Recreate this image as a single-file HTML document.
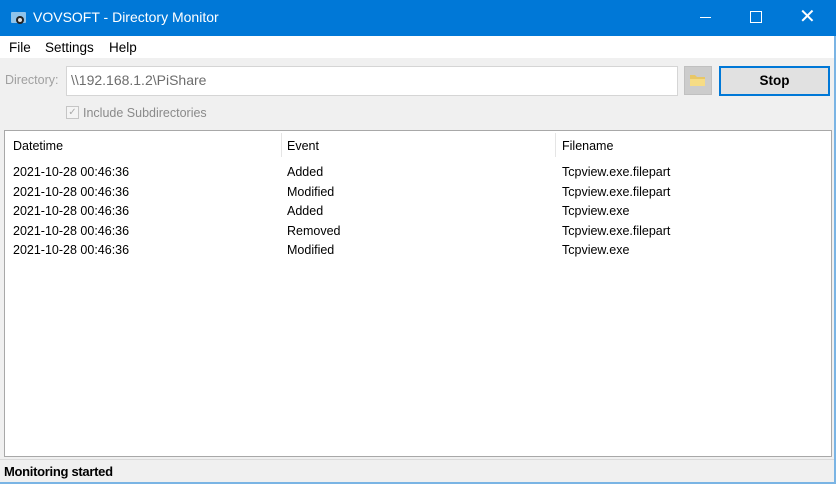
<!DOCTYPE html>
<html><head><style>
body{margin:0;width:836px;height:484px;overflow:hidden;background:#f0f0f0;font-family:"Liberation Sans",sans-serif;font-size:12.5px;color:#000;position:relative}
.a{position:absolute}
</style></head><body>
<div class="a" style="left:0;top:0;width:836px;height:36px;background:#0078d7;color:#fff">
 <svg class="a" style="left:10px;top:10px" width="18" height="16"><rect x="1" y="2" width="15" height="11" rx="1" fill="#8fc3ea"/><circle cx="10" cy="10" r="4" fill="#222"/><circle cx="10" cy="10" r="2" fill="#ddd"/></svg>
 <div class="a" style="left:33px;top:9px;font-size:14px">VOVSOFT - Directory Monitor</div>
 <div class="a" style="left:700px;top:17px;width:11px;height:1px;background:#fff"></div>
 <div class="a" style="left:750px;top:11px;width:10px;height:10px;border:1px solid #fff"></div>
 <div class="a" style="left:799px;top:4px;font-size:20px">✕</div>
</div>
<div class="a" style="left:0;top:36px;width:836px;height:22px;background:#fff"></div>
<div class="a" style="left:9px;top:40px;font-size:13.5px">File</div>
<div class="a" style="left:45px;top:40px;font-size:13.5px">Settings</div>
<div class="a" style="left:109px;top:40px;font-size:13.5px">Help</div>
<div class="a" style="left:5px;top:73px;color:#a0a0a0">Directory:</div>
<div class="a" style="left:66px;top:66px;width:610px;height:28px;background:#fff;border:1px solid #d5d5d5"></div>
<div class="a" style="left:71px;top:72px;font-size:14px;color:#6d6d6d">\\192.168.1.2\PiShare</div>
<div class="a" style="left:684px;top:66px;width:28px;height:29px;background:#ccc;border:1px solid #c0c0c0;box-sizing:border-box"></div>
<svg class="a" style="left:689px;top:73px" width="18" height="14"><path d="M1 2h5l2 2h8v9H1z" fill="#e8c766"/><path d="M1 6h15v7H1z" fill="#f6dc85"/></svg>
<div class="a" style="left:719px;top:66px;width:111px;height:30px;box-sizing:border-box;border:2px solid #0078d7;background:#e1e1e1;text-align:center;line-height:26px;font-weight:bold;font-size:13.5px">Stop</div>
<div class="a" style="left:66px;top:106px;width:11px;height:11px;border:1px solid #c5c5c5;background:#f4f4f4;color:#aaa;font-size:10px;line-height:11px;text-align:center">✓</div>
<div class="a" style="left:83px;top:106px;color:#8a8a8a">Include Subdirectories</div>
<div class="a" style="left:4px;top:130px;width:826px;height:325px;background:#fff;border:1px solid #a8a8a8"></div>
<div class="a" style="left:281px;top:133px;width:1px;height:24px;background:#e5e5e5"></div>
<div class="a" style="left:555px;top:133px;width:1px;height:24px;background:#e5e5e5"></div>
<div class="a" style="left:13px;top:139px">Datetime</div>
<div class="a" style="left:287px;top:139px">Event</div>
<div class="a" style="left:562px;top:139px">Filename</div>
<div class="a" style="left:13px;top:163px;line-height:19.5px">2021-10-28 00:46:36<br>2021-10-28 00:46:36<br>2021-10-28 00:46:36<br>2021-10-28 00:46:36<br>2021-10-28 00:46:36</div>
<div class="a" style="left:287px;top:163px;line-height:19.5px">Added<br>Modified<br>Added<br>Removed<br>Modified</div>
<div class="a" style="left:562px;top:163px;line-height:19.5px">Tcpview.exe.filepart<br>Tcpview.exe.filepart<br>Tcpview.exe<br>Tcpview.exe.filepart<br>Tcpview.exe</div>
<div class="a" style="left:0;top:459px;width:836px;height:1px;background:#dadada"></div>
<div class="a" style="left:4px;top:464px;font-weight:bold;font-size:13px;letter-spacing:-0.3px">Monitoring started</div>
<div class="a" style="left:0;top:482px;width:836px;height:2px;background:#7ab4e4"></div>
<div class="a" style="left:834px;top:36px;width:2px;height:448px;background:#7ab4e4"></div>
</body></html>
